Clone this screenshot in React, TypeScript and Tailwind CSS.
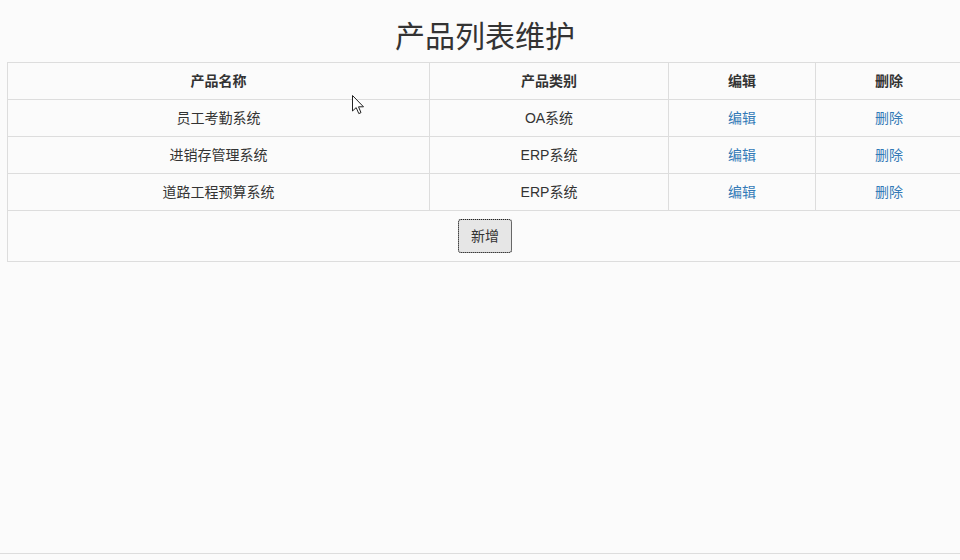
import React from 'react'

const products = [
  { name: '员工考勤系统', type: 'OA系统' },
  { name: '进销存管理系统', type: 'ERP系统' },
  { name: '道路工程预算系统', type: 'ERP系统' },
]

const font = {
  fontFamily: '"Liberation Sans", "Noto Sans CJK SC", sans-serif',
}

function Cursor() {
  return (
    <svg
      className="pointer-events-none absolute left-[352px] top-[95px]"
      width="13"
      height="20"
      viewBox="0 0 13 20"
    >
      <path
        d="M0.5 0.5 L0.5 16 L4.2 12.6 L6.8 18.6 L9 17.6 L6.5 11.8 L11.5 11.8 Z"
        fill="#fff"
        stroke="#222"
        strokeWidth="1"
        strokeLinejoin="round"
      />
    </svg>
  )
}

export default function App() {
  return (
    <div
      className="relative flex h-[560px] w-[960px] flex-col overflow-hidden bg-[#fbfbfb] text-[14px] leading-[20px] text-[#333]"
      style={font}
    >
      <div className="w-[970px]">
        <h1 className="mt-[20px] mb-[9px] text-center text-[30px] leading-[33px] font-normal text-[#333]">
          产品列表维护
        </h1>
        <table className="ml-[7px] w-[956px] border-collapse border border-[#ddd]">
          <thead>
            <tr>
              <th className="w-[422px] border border-[#ddd] p-2 text-center font-bold">产品名称</th>
              <th className="w-[239px] border border-[#ddd] p-2 text-center font-bold">产品类别</th>
              <th className="w-[147px] border border-[#ddd] p-2 text-center font-bold">编辑</th>
              <th className="border border-[#ddd] p-2 text-center font-bold">删除</th>
            </tr>
          </thead>
          <tbody>
            {products.map((p) => (
              <tr key={p.name}>
                <td className="border border-[#ddd] p-2 text-center">{p.name}</td>
                <td className="border border-[#ddd] p-2 text-center">{p.type}</td>
                <td className="border border-[#ddd] p-2 text-center">
                  <a href="#" className="text-[#337ab7] hover:underline">编辑</a>
                </td>
                <td className="border border-[#ddd] p-2 text-center">
                  <a href="#" className="text-[#337ab7] hover:underline">删除</a>
                </td>
              </tr>
            ))}
            <tr>
              <td colSpan={4} className="border border-[#ddd] p-2 text-center">
                <button className="h-[34px] rounded-[3px] border border-[#adadad] bg-[#e6e6e6] px-3 text-[14px] text-[#333] outline-1 outline-offset-[-1px] outline-dotted outline-[#222]">
                  新增
                </button>
              </td>
            </tr>
          </tbody>
        </table>
      </div>
      <div className="mt-auto h-[7px] border-t border-[#ddd]" />
      <Cursor />
    </div>
  )
}
